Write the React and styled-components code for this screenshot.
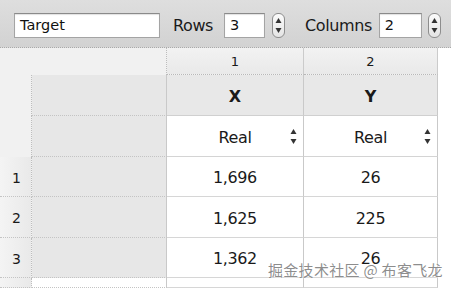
import React from "react";
import styled, { createGlobalStyle } from "styled-components";

const Global = createGlobalStyle`
  html, body { margin: 0; padding: 0; background: #ffffff; }
  body { width: 451px; height: 288px; overflow: hidden; font-family: "DejaVu Sans", "Noto Sans CJK SC", sans-serif; color: #1a1a1a; }
`;

const Page = styled.div`
  position: relative;
  width: 451px;
  height: 288px;
  overflow: hidden;
  display: flex;
  flex-direction: column;
`;

const Toolbar = styled.div`
  height: 48px;
  flex: none;
  display: flex;
  align-items: center;
  padding: 4px 0 0 14px;
  background: linear-gradient(#dedede, #d2d2d2);
  border-bottom: 1px dotted #a9a9a9;
  box-sizing: border-box;
`;

const Field = styled.div`
  width: ${(p) => p.$w}px;
  height: 25px;
  box-sizing: border-box;
  background: #ffffff;
  border: 1px solid #a4a4a4;
  border-top-color: #8a8a8a;
  box-shadow: inset 0 1px 1px rgba(0, 0, 0, 0.12);
  font-size: 14.5px;
  line-height: 23px;
  padding-left: ${(p) => p.$pl || 5}px;
  margin-right: ${(p) => p.$mr || 0}px;
  color: #111;
`;

const Label = styled.span`
  font-size: 16px;
  letter-spacing: -0.4px;
  color: #1a1a1a;
  margin-right: ${(p) => p.$mr}px;
`;

const StepperBox = styled.div`
  width: 13px;
  height: 25px;
  box-sizing: border-box;
  border: 1px solid #8d8d8d;
  border-radius: 6px;
  background: linear-gradient(#fbfbfb, #e4e4e4);
  display: flex;
  align-items: center;
  justify-content: center;
  margin-right: ${(p) => p.$mr || 0}px;
`;

const Arrows = ({ h = 17 }) => (
  <svg width="7" height={h} viewBox={`0 0 7 ${h}`}>
    <path d={`M3.5 1 L6.5 6 L0.5 6 Z`} fill="#333" />
    <path d={`M3.5 ${h - 1} L6.5 ${h - 6} L0.5 ${h - 6} Z`} fill="#333" />
  </svg>
);

const Stepper = ({ mr }) => (
  <StepperBox $mr={mr}>
    <Arrows h={17} />
  </StepperBox>
);

const Grid = styled.div`
  flex: 1;
  display: grid;
  grid-template-columns: 32px 135px 137px 134px 1fr;
  grid-template-rows: 27px 41px 41px 40px 41px 40px 1fr;
  background: #ffffff;
`;

const Corner = styled.div`
  background: #f1f1f1;
  border-right: ${(p) => (p.$edge ? "1px dotted #bdbdbd" : "none")};
`;

const ColHead = styled.div`
  background: linear-gradient(#f2f2f2, #e9e9e9);
  border-right: 1px solid #cbcbcb;
  border-bottom: 1px dotted #b8b8b8;
  display: flex;
  align-items: center;
  justify-content: center;
  padding-top: 1px;
  font-size: 13px;
  color: #1a1a1a;
`;

const NameCell = styled.div`
  background: #e8e8e8;
  border-right: 1px solid #c9c9c9;
  border-bottom: 1px solid #d0d0d0;
  display: flex;
  align-items: center;
  justify-content: center;
  padding-top: 2px;
  font-size: 16px;
  font-weight: bold;
  color: #1a1a1a;
`;

const TypeCell = styled.div`
  position: relative;
  background: #ffffff;
  border-right: 1px solid #c9c9c9;
  border-bottom: 1px solid #d4d4d4;
  display: flex;
  align-items: center;
  justify-content: center;
  padding-top: 2px;
  font-size: 16px;
  letter-spacing: -0.4px;
  color: #1a1a1a;
  & > svg {
    position: absolute;
    right: 6px;
    top: 12px;
  }
`;

const RowHead = styled.div`
  background: linear-gradient(90deg, #f4f4f4, #e9e9e9);
  border-right: 1px dotted #bdbdbd;
  border-bottom: 1px dotted #c4c4c4;
  display: flex;
  align-items: center;
  padding: 2px 0 0 12px;
  font-size: 14px;
  color: #1a1a1a;
`;

const LabelCell = styled.div`
  background: ${(p) => (p.$empty ? "#ffffff" : "#e7e7e7")};
  border-right: 1px solid #c9c9c9;
  border-bottom: 1px dotted #c4c4c4;
`;

const DataCell = styled.div`
  background: #ffffff;
  border-right: 1px solid #c9c9c9;
  border-bottom: 1px solid #d6d6d6;
  display: flex;
  align-items: center;
  justify-content: center;
  padding-top: 2px;
  font-size: 16px;
  letter-spacing: -0.4px;
  color: #1a1a1a;
`;

const Filler = styled.div`
  background: #ffffff;
`;

const Watermark = styled.div`
  position: absolute;
  left: 268px;
  top: 259px;
  font-size: 15px;
  letter-spacing: 0.3px;
  color: rgba(120, 120, 120, 0.85);
  text-shadow: 0 0 2px #fff, 0 0 1px #fff;
  white-space: nowrap;
  font-family: "Noto Sans CJK SC", "DejaVu Sans", sans-serif;
`;

const rows = [
  ["1", "1,696", "26"],
  ["2", "1,625", "225"],
  ["3", "1,362", "26"],
];

export default function App() {
  return (
    <Page>
      <Global />
      <Toolbar>
        <Field $w={146} $mr={13}>Target</Field>
        <Label $mr={11}>Rows</Label>
        <Field $w={41} $mr={7}>3</Field>
        <Stepper mr={20} />
        <Label $mr={7}>Columns</Label>
        <Field $w={43} $mr={6}>2</Field>
        <Stepper />
      </Toolbar>
      <Grid>
        <Corner />
        <Corner $edge />
        <ColHead>1</ColHead>
        <ColHead>2</ColHead>
        <Filler />

        <Corner $edge />
        <LabelCell />
        <NameCell>X</NameCell>
        <NameCell>Y</NameCell>
        <Filler />

        <Corner $edge />
        <LabelCell />
        <TypeCell>
          Real
          <Arrows h={17} />
        </TypeCell>
        <TypeCell>
          Real
          <Arrows h={17} />
        </TypeCell>
        <Filler />

        {rows.map(([n, x, y]) => (
          <React.Fragment key={n}>
            <RowHead>{n}</RowHead>
            <LabelCell />
            <DataCell>{x}</DataCell>
            <DataCell>{y}</DataCell>
            <Filler />
          </React.Fragment>
        ))}

        <RowHead />
        <LabelCell $empty />
        <DataCell />
        <DataCell />
        <Filler />
      </Grid>
      <Watermark>掘金技术社区 @ 布客飞龙</Watermark>
    </Page>
  );
}
